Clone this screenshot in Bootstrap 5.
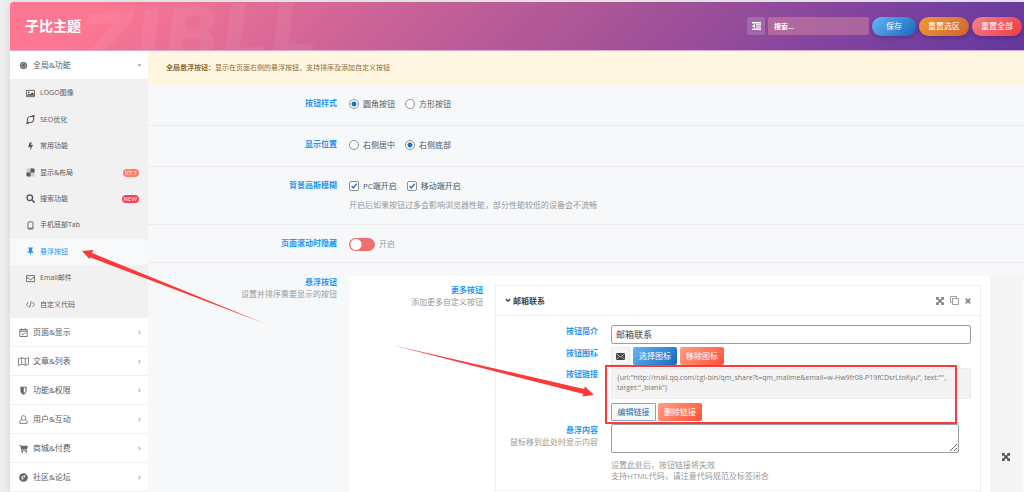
<!DOCTYPE html>
<html lang="zh-CN">
<head>
<meta charset="utf-8">
<meta name="viewport" content="width=device-width, initial-scale=1">
<title>子比主题</title>
<link rel="stylesheet" href="https://cdn.jsdelivr.net/npm/bootstrap@5.3.0/dist/css/bootstrap.min.css">
<style>
body{font-family:"Open Sans","Noto Sans CJK SC",sans-serif;font-size:8px;line-height:12px;color:#555;background:#eee;overflow:hidden}
.panel-wrap{margin:2px 0 0 10px;min-height:calc(100vh - 2px);background:#f6f8fa;border-top-left-radius:4px;overflow:hidden;box-shadow:0 0 8px rgba(0,0,0,.12)}
.topbar{height:49px;padding:0 2px 0 15px;border-bottom:1px solid #d9a9cb;background:linear-gradient(135deg,#fd7792 0%,#fd7792 9%,#cf6497 34%,#9c4f98 66%,#8043a0 82%,#63399f 100%)}
.topbar h1{font-size:14px;line-height:18px;font-weight:700;color:#fff;margin:0}
.watermark{left:70px;top:4px;font:italic 700 76px/76px "DejaVu Sans",sans-serif;color:rgba(255,255,255,.06);transform:rotate(-4deg);transform-origin:left center;pointer-events:none}
.tool,.find{height:18px;border:0;border-radius:2px;background:rgba(255,255,255,.17);color:#fff}
.tool{width:18px}
.find{width:101px;font-size:7px;padding:0 6px;background:rgba(225,145,155,.45)}
.find::placeholder{color:#fff;font-weight:700}
.pill{height:19px;border:0;border-radius:10px;color:#fff;font-size:8px;line-height:12px;padding:0;width:50px;box-shadow:0 2px 4px rgba(30,20,60,.3)}
.pill-save{width:44px}
.g-blue{background:linear-gradient(135deg,#64b7f5,#1867bd)}
.g-orange{background:linear-gradient(135deg,#ee9a3a,#d1622f)}
.g-red{background:linear-gradient(135deg,#f58087,#f03a44)}
.g-coral{background:linear-gradient(135deg,#ff9f83,#ff5138)}
.side{width:138px;background:#fff}
.side a{color:#5a5a5a;text-decoration:none}
.side-main{height:29px;padding:0 6px 0 8px;gap:4px;border-bottom:1px solid #f0f0f0}
.side-main svg{width:11px;height:9px;color:#666}
.side-main .arr{width:5px;height:5px;margin-left:auto;color:#888}
.side-sub{display:grid;grid-auto-rows:1fr;min-height:238px;background:#f1f1f1;font-size:7px}
.side-sub a{padding:0 9px 0 16px;gap:5px}
.side-sub svg{width:9px;height:9px}
.side-sub a.on{background:#f7f9fb;color:#1e96f2}
.tag{margin-left:auto;border-radius:5px;height:8px;padding:0 2px;font-size:6px;line-height:8px;color:#fff;background:#ff8169}
.tag-new{background:#ff3f52}
.notice{padding:10px 18px 11px;line-height:13px;font-size:7px;background:#fef6e0;color:#8d6d3a}
.f-row{padding:12px 0 14px;border-bottom:1px solid #ececee;gap:12px}
.f-tight{padding-bottom:11px}
.f-open{padding:13px 2px 0 0;border:0}
.f-label{width:189px;flex:none;text-align:right;color:#1e96f2;font-weight:700;line-height:12px}
.f-label small,.hint{display:block;font-size:8px;font-weight:400;color:#999}
.f-opts{line-height:14px;gap:10px}
.f-opts label{gap:4px}
.form-check-input.tick{width:10px;height:10px;margin:0;border-color:#8c8f94;background-color:#fff;box-shadow:none}
.tick[type=checkbox]{border-radius:2px}
.tick[type=radio]:checked{background-image:radial-gradient(circle,#1e73be 0 2px,transparent 3px);background-size:auto}
.tick[type=checkbox]:checked{background-image:url("data:image/svg+xml,%3Csvg xmlns='http://www.w3.org/2000/svg' viewBox='0 0 10 10'%3E%3Cpath d='M2 5l2.2 2.5L8.3 2' fill='none' stroke='%231e73be' stroke-width='1.7'/%3E%3C/svg%3E")}
.form-check-input.flip{width:26px;height:13px;margin:0;border:0;border-radius:7px;background-color:#ee6e73;background-image:radial-gradient(circle at 7px 50%,#fff 5px,transparent 6px);background-position:0 0;background-size:100% 100%}
.flip-text{color:#999}
.group-box{background:#fff;padding:8px 9px 0 0;gap:12px}
.group-box>.f-label{width:134px}
.drag{width:32px;flex:none;background:#f5f5f5;padding-top:177px;color:#555}
.item-box{margin-top:1px;border:1px solid #eee;border-bottom:0}
.item-head{height:30px;padding:0 9px 0 9px;border-bottom:1px solid #eee;color:#444;gap:2px}
.item-head button{border:0;background:none;padding:0;color:#888;line-height:0}
.item-body{padding:9px 9px 9px 0;gap:3px;border-bottom:1px solid #f1f1f1}
.item-body>div{gap:13px}
.item-body .f-label{width:102px}
.field{border:1px solid #9b9ea3;border-radius:2px;background:#fff;color:#444;padding:0 4px;width:100%;font-size:9px;line-height:14px}
input.field{height:19px}
textarea.field{height:29px;width:calc(100% - 12px);resize:vertical;display:block}
.mini{height:18px;width:44px;border:0;border-radius:2px;padding:0;font-size:8px;line-height:12px;color:#fff}
.mini-line{width:45px;border:1px solid #7ba6d2;border-radius:1px;background:#f6f7f7;color:#2271b1}
.glyph{width:19px;height:18px;background:#f5f5f5;border:1px solid #e8e8e8}
.link-code{background:#f3f3f3;border:1px solid #ececec;border-radius:1px;padding:4px 5px 5px;line-height:10px;font-size:7px;color:#777}
.hint{line-height:11px;margin-top:6px}
.marks{left:0;top:0;width:1024px;height:492px;pointer-events:none}
</style>
</head>
<body>
<svg class="d-none">
  <symbol id="expand" viewBox="0 0 10 10"><path d="M0 0h4L2.900 1.100 5 3.400 7.100 1.100 6 0h4v4L8.900 2.900 6.600 5l2.300 2.100L10 6v4H6l1.100-1.100L5 6.600 2.900 8.900 4 10H0V6l1.100 1.100L3.400 5 1.100 2.900 0 4z" fill="currentColor"/></symbol>
  <symbol id="right" viewBox="0 0 5 5"><path d="M1.500.8l1.700 1.700-1.700 1.700" fill="none" stroke="currentColor"/></symbol>
</svg>
<div class="panel-wrap">
  <header class="topbar d-flex align-items-center position-relative overflow-hidden">
    <span class="watermark position-absolute" aria-hidden="true">ZIBLL</span>
    <h1 class="me-auto">子比主题</h1>
    <div class="d-flex align-items-center" style="gap:3px">
      <button type="button" class="tool p-0 d-flex align-items-center justify-content-center" aria-label="展开全部"><svg width="9" height="8" viewBox="0 0 9 8"><path d="M0 .7h9M4 2.900h5M4 5.100h5M0 7.300h9" stroke="#fff" stroke-width="1.400"/><path d="M3 2v4L0 4z" fill="#fff"/></svg></button>
      <input class="find" type="search" placeholder="搜索..." aria-label="搜索">
      <button type="button" class="pill pill-save g-blue">保存</button>
      <button type="button" class="pill g-orange">重置选区</button>
      <button type="button" class="pill g-red">重置全部</button>
    </div>
  </header>
  <div class="d-flex">
    <nav class="side flex-shrink-0">
      <a href="#" class="side-main d-flex align-items-center"><svg viewBox="0 0 10 10"><circle cx="5" cy="5" r="4" fill="#999"/><circle cx="5" cy="5" r="3.500" fill="none" stroke="currentColor"/><circle cx="5" cy="5" r="1.600" fill="currentColor"/></svg>全局&amp;功能<svg class="arr" viewBox="0 0 5 5"><path d="M.5 1.500h4l-2 2z" fill="currentColor"/></svg></a>
      <div class="side-sub">
        <a href="#" class="d-flex align-items-center"><svg viewBox="0 0 10 10"><path d="M.5 1.500h9v7h-9z" fill="none" stroke="currentColor"/><circle cx="3" cy="3.700" r="1" fill="currentColor"/><path d="M1.500 7.500V6.500L3 5l1.200 1.200L7 3.500l1.700 1.800v2.200z" fill="currentColor"/></svg>LOGO图像</a>
        <a href="#" class="d-flex align-items-center"><svg viewBox="0 0 10 10"><path d="M2 7.800C.6 5 2 1.700 5 1.700h3M8 2.200C9.400 5 8 8.300 5 8.300H2" fill="none" stroke="currentColor" stroke-width="1.200"/><path d="M6.500 0h3.300L9 3.300zM3.500 10H.2L1 6.700z" fill="currentColor"/></svg>SEO优化</a>
        <a href="#" class="d-flex align-items-center"><svg viewBox="0 0 10 10"><path d="M4 .5h2.500L5.600 3.300 8 3 4.500 9.800 5 5.500l-2.600.4z" fill="currentColor"/></svg>常用功能</a>
        <a href="#" class="d-flex align-items-center"><svg viewBox="0 0 10 10"><rect x=".5" y=".5" width="9" height="9" rx="1" fill="#ccc"/><path d="M5 .5h3.500l1 1V5H5zM.5 5H5v4.500H1.500l-1-1z" fill="currentColor"/></svg>显示&amp;布局<span class="tag">V7.1</span></a>
        <a href="#" class="d-flex align-items-center"><svg viewBox="0 0 10 10"><circle cx="4.200" cy="4.200" r="3.100" fill="none" stroke="currentColor" stroke-width="1.500"/><path d="M6.500 6.500l3 3" stroke="currentColor" stroke-width="1.800"/></svg>搜索功能<span class="tag tag-new">NEW</span></a>
        <a href="#" class="d-flex align-items-center"><svg viewBox="0 0 10 10"><rect x="2.200" y="1" width="5.600" height="8" rx=".8" fill="none" stroke="currentColor"/><path d="M2.500 8h5" stroke="currentColor"/></svg>手机底部Tab</a>
        <a href="#" class="on d-flex align-items-center"><svg viewBox="0 0 10 10"><path d="M2.500.5h5v1L6.800 2v2.500c1 .4 1.500 1 1.500 1.800H5.700L5 9.800l-.7-3.500H1.700c0-.8.500-1.400 1.500-1.800V2l-.7-.5z" fill="currentColor"/></svg>悬浮按钮</a>
        <a href="#" class="d-flex align-items-center"><svg viewBox="0 0 10 10"><path d="M.5 1.800h9v6.700h-9zM.5 3.200L5 6.500l4.500-3.300" fill="none" stroke="currentColor" stroke-width=".9"/></svg>Email邮件</a>
        <a href="#" class="d-flex align-items-center"><svg viewBox="0 0 10 10"><path d="M2.800 2.500L.5 5l2.300 2.500M7.200 2.500L9.500 5 7.200 7.500M5.900 1.500L4.100 8.500" fill="none" stroke="currentColor" stroke-width=".9"/></svg>自定义代码</a>
      </div>
      <a href="#" class="side-main d-flex align-items-center"><svg viewBox="0 0 10 10"><path d="M1 1.800h8v7.700H1zM1 3.500h8M3 .3v2M7 .3v2M3.200 6.300l1.400 1.300 2.300-2.500" fill="none" stroke="currentColor"/></svg>页面&amp;显示<svg class="arr"><use href="#right"/></svg></a>
      <a href="#" class="side-main d-flex align-items-center"><svg viewBox="0 0 12 10"><path d="M.5 2L4 .8l4 1.200L11.500.8V8L8 9.200 4 8 .5 9.200zM4 .8V8M8 2v7.200" fill="none" stroke="currentColor" stroke-width=".9"/></svg>文章&amp;列表<svg class="arr"><use href="#right"/></svg></a>
      <a href="#" class="side-main d-flex align-items-center"><svg viewBox="0 0 10 10"><path d="M1.500.8h7V5c0 2-1.500 3.600-3.500 4.700C3 8.600 1.500 7 1.500 5z" fill="currentColor"/><path d="M5.300 2h2v3.200c0 1-.8 2-2 2.900z" fill="#fff"/></svg>功能&amp;权限<svg class="arr"><use href="#right"/></svg></a>
      <a href="#" class="side-main d-flex align-items-center"><svg viewBox="0 0 10 10"><path d="M1 9.300V7.500C1 6 2 5.300 3.200 5.200 2 3.300 2.800.7 5 .7s3 2.600 1.800 4.500C8 5.300 9 6 9 7.500v1.800zM3.200 5.300c1.200.8 2.400.8 3.600 0" fill="none" stroke="currentColor" stroke-width=".9"/></svg>用户&amp;互动<svg class="arr"><use href="#right"/></svg></a>
      <a href="#" class="side-main d-flex align-items-center"><svg viewBox="0 0 10 10"><path d="M0 1h2l.3 1H9.800L9 6H3.300l.2.800h5.300v.8H2.700L1.400 1.800H0z" fill="currentColor"/><circle cx="3.500" cy="8.700" r="1" fill="currentColor"/><circle cx="8" cy="8.700" r="1" fill="currentColor"/></svg>商城&amp;付费<svg class="arr"><use href="#right"/></svg></a>
      <a href="#" class="side-main d-flex align-items-center"><svg viewBox="0 0 10 10"><circle cx="5" cy="5" r="4.800" fill="currentColor"/><path d="M2 4.500L7.500 2 5.800 5.500 3 8l.5-2.500z" fill="#fff"/><circle cx="5" cy="4.800" r="1" fill="currentColor"/></svg>社区&amp;论坛<svg class="arr"><use href="#right"/></svg></a>
    </nav>
    <main class="flex-grow-1 d-flex flex-column">
      <div class="notice"><b>全局悬浮按钮：</b>显示在页面右侧的悬浮按钮，支持排序及添加自定义按钮</div>
      <div class="f-row d-flex">
        <div class="f-label">按钮样式</div>
        <div class="f-opts d-flex">
          <label class="d-flex align-items-center"><input class="form-check-input tick" type="radio" name="shape" checked>圆角按钮</label>
          <label class="d-flex align-items-center"><input class="form-check-input tick" type="radio" name="shape">方形按钮</label>
        </div>
      </div>
      <div class="f-row d-flex">
        <div class="f-label">显示位置</div>
        <div class="f-opts d-flex">
          <label class="d-flex align-items-center"><input class="form-check-input tick" type="radio" name="place">右侧居中</label>
          <label class="d-flex align-items-center"><input class="form-check-input tick" type="radio" name="place" checked>右侧底部</label>
        </div>
      </div>
      <div class="f-row d-flex">
        <div class="f-label">背景高斯模糊</div>
        <div>
          <div class="f-opts d-flex">
            <label class="d-flex align-items-center"><input class="form-check-input tick" type="checkbox" checked>PC端开启</label>
            <label class="d-flex align-items-center"><input class="form-check-input tick" type="checkbox" checked>移动端开启</label>
          </div>
          <span class="hint">开启后如果按钮过多会影响浏览器性能，部分性能较低的设备会不流畅</span>
        </div>
      </div>
      <div class="f-row f-tight d-flex">
        <div class="f-label">页面滚动时隐藏</div>
        <div class="f-opts d-flex"><label class="flip-text d-flex align-items-center"><input class="form-check-input flip" type="checkbox" role="switch">开启</label></div>
      </div>
      <div class="f-row f-open d-flex flex-grow-1">
        <div class="f-label">悬浮按钮<small>设置并排序需要显示的按钮</small></div>
        <div class="d-flex flex-grow-1">
          <div class="group-box d-flex flex-grow-1">
            <div class="f-label">更多按钮<small>添加更多自定义按钮</small></div>
            <section class="item-box flex-grow-1">
              <div class="item-head d-flex align-items-center">
                <svg width="6" height="5" viewBox="0 0 6 5"><path d="M.8 1L3 3.300 5.200 1" fill="none" stroke="currentColor" stroke-width="1.300"/></svg>
                <b class="me-auto">邮箱联系</b>
                <div class="d-flex align-items-center" style="gap:6px">
                  <button type="button" aria-label="移动"><svg width="8" height="8"><use href="#expand"/></svg></button>
                  <button type="button" aria-label="复制"><svg width="9" height="9" viewBox="0 0 9 9"><path d="M2.500 6.500h-2v-6h6v2M2.500 2.500h6v6h-6z" fill="none" stroke="currentColor" stroke-width=".8"/></svg></button>
                  <button type="button" aria-label="删除"><svg width="6" height="6" viewBox="0 0 6 6"><path d="M.7.7l4.600 4.600M5.300.7L.7 5.300" stroke="currentColor" stroke-width="1.800"/></svg></button>
                </div>
              </div>
              <div class="item-body d-flex flex-column">
                <div class="d-flex">
                  <label class="f-label" for="intro">按钮简介</label>
                  <div class="flex-grow-1"><input id="intro" class="field d-block" type="text" value="邮箱联系"></div>
                </div>
                <div class="d-flex">
                  <div class="f-label">按钮图标</div>
                  <div class="d-flex" style="gap:3px">
                    <span class="glyph d-flex align-items-center justify-content-center"><svg width="9" height="7" viewBox="0 0 9 7"><rect width="9" height="7" rx="1" fill="#444"/><path d="M.5 1l4 3 4-3M.7 6l2.300-2.300M8.300 6L6 3.700" fill="none" stroke="#ddd" stroke-width=".7"/></svg></span>
                    <button type="button" class="mini g-blue">选择图标</button>
                    <button type="button" class="mini g-coral">移除图标</button>
                  </div>
                </div>
                <div class="d-flex">
                  <div class="f-label">按钮链接</div>
                  <div class="flex-grow-1">
                    <div class="link-code">{url:"http://mail.qq.com/cgi-bin/qm_share?t=qm_mailme&amp;email=w-Hw9fr08-P19fCDsrLtoKyu", text:"",<br>target:"_blank"}</div>
                    <div class="d-flex mt-1" style="gap:2px">
                      <button type="button" class="mini mini-line">编辑链接</button>
                      <button type="button" class="mini g-coral">删除链接</button>
                    </div>
                  </div>
                </div>
                <div class="d-flex">
                  <label class="f-label" for="tip">悬浮内容<small>鼠标移到此处时显示内容</small></label>
                  <div class="flex-grow-1">
                    <textarea id="tip" class="field"></textarea>
                    <span class="hint">设置此处后，按钮链接将失效<br>支持HTML代码，请注意代码规范及标签闭合</span>
                  </div>
                </div>
              </div>
            </section>
          </div>
          <div class="drag d-flex justify-content-center align-items-start"><svg width="8" height="8"><use href="#expand"/></svg></div>
        </div>
      </div>
    </main>
  </div>
</div>
<svg class="marks position-absolute" viewBox="0 0 1024 492" fill="#fd3a3a">
  <path d="M82 251l11.500-1-1.500 3L267 324.500 90.500 257.500 89.500 259z"/>
  <path d="M394 345.500L584 389l1-2.500 9 8.500-12 1.500 1.500-2.500z"/>
  <rect x="606" y="366" width="350" height="57" fill="none" stroke="#fd3a3a" stroke-width="2"/>
</svg>
<script src="https://cdn.jsdelivr.net/npm/bootstrap@5.3.0/dist/js/bootstrap.bundle.min.js"></script>
</body>
</html>
